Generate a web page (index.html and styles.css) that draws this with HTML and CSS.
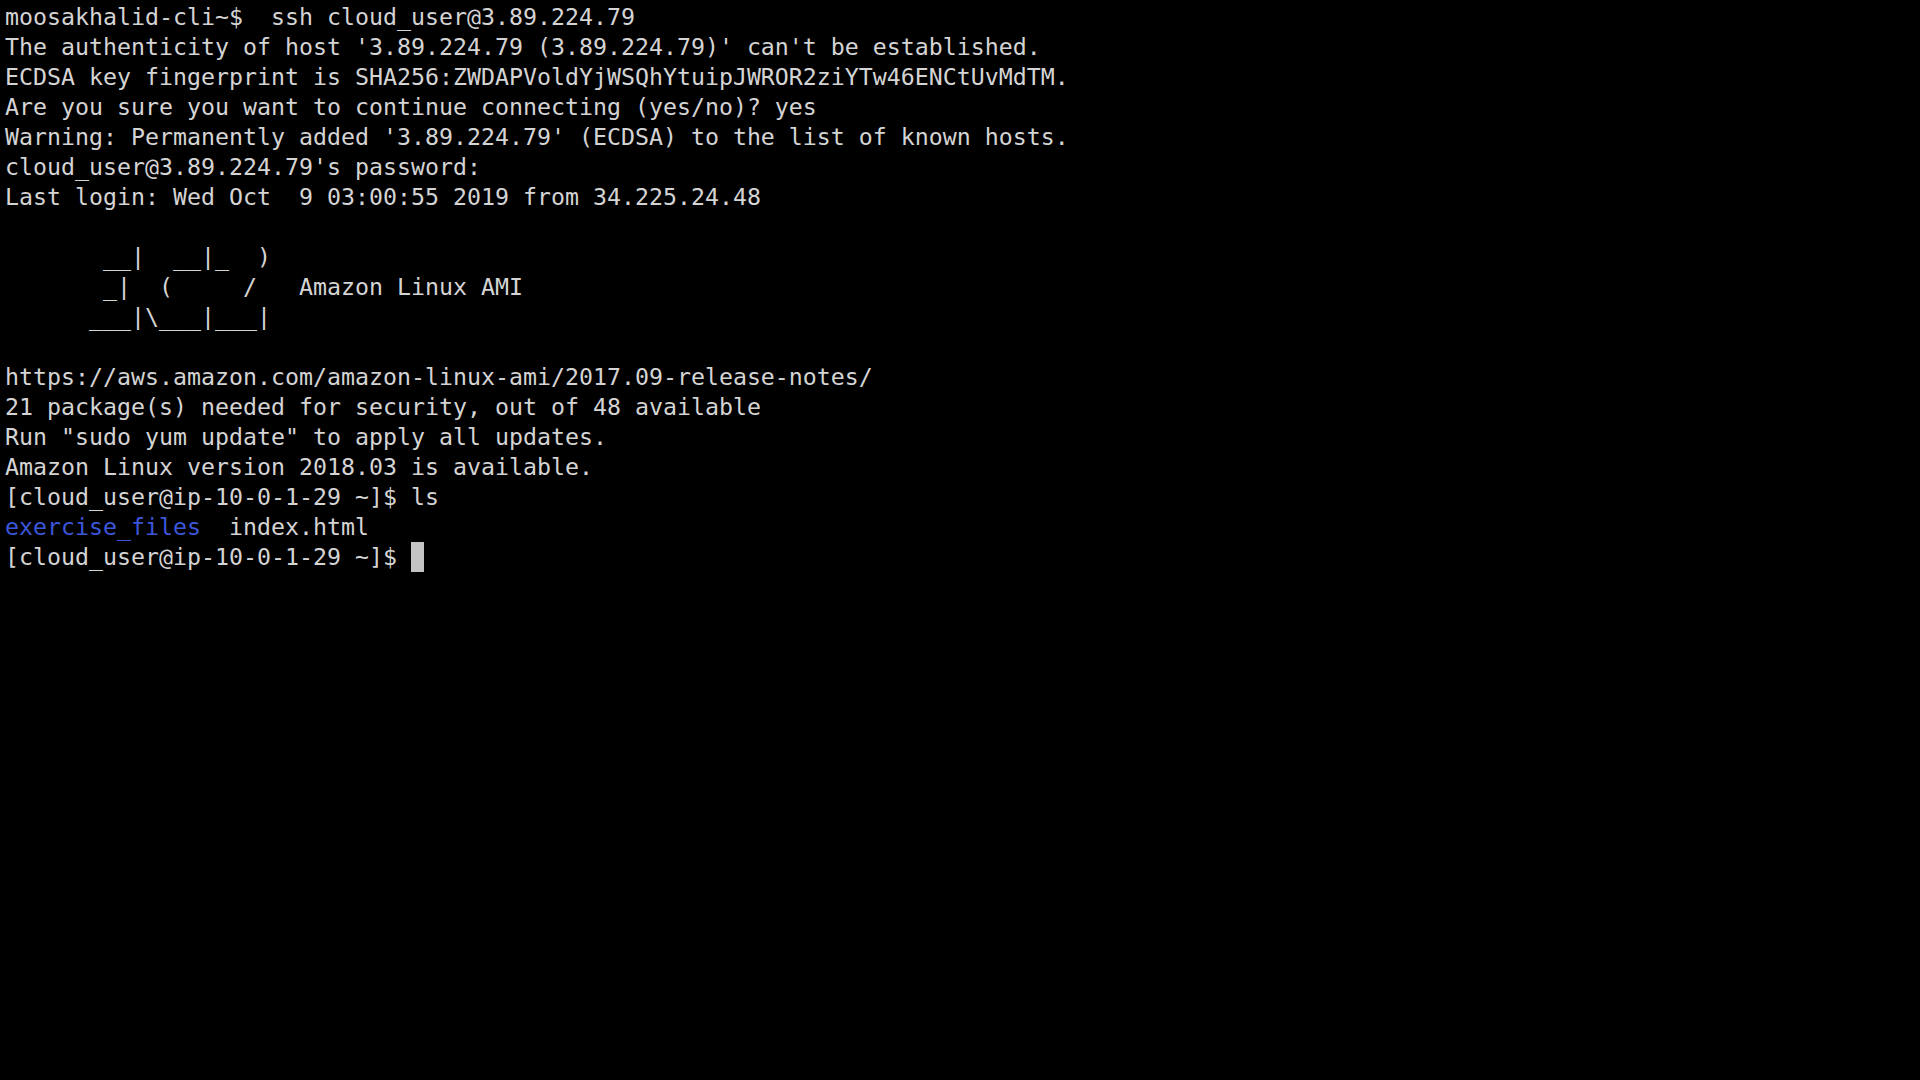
FILE: index.html
```html
<!DOCTYPE html>
<html lang="en">
<head>
<meta charset="utf-8">
<title>Terminal</title>
<link rel="stylesheet" href="styles.css">
</head>
<body>
<main class="terminal"><pre class="output">moosakhalid-cli~$  ssh cloud_user@3.89.224.79
The authenticity of host '3.89.224.79 (3.89.224.79)' can't be established.
ECDSA key fingerprint is SHA256:ZWDAPVoldYjWSQhYtuipJWROR2ziYTw46ENCtUvMdTM.
Are you sure you want to continue connecting (yes/no)? yes
Warning: Permanently added '3.89.224.79' (ECDSA) to the list of known hosts.
cloud_user@3.89.224.79's password: 
Last login: Wed Oct  9 03:00:55 2019 from 34.225.24.48

       __|  __|_  )
       _|  (     /   Amazon Linux AMI
      ___|\___|___|

https://aws.amazon.com/amazon-linux-ami/2017.09-release-notes/
21 package(s) needed for security, out of 48 available
Run "sudo yum update" to apply all updates.
Amazon Linux version 2018.03 is available.
[cloud_user@ip-10-0-1-29 ~]$ ls
<span class="dir">exercise_files</span>  index.html
[cloud_user@ip-10-0-1-29 ~]$ <span class="cursor"> </span></pre></main>
</body>
</html>
```
FILE: styles.css
```css
html, body {
  margin: 0;
  padding: 0;
  background: #000;
  height: 100%;
}
.terminal {
  padding: 2px 5px;
  background: #000;
  min-height: 100vh;
  box-sizing: border-box;
}
.output {
  margin: 0;
  font-family: "DejaVu Sans Mono", "Liberation Mono", monospace;
  font-size: 23.25px;
  line-height: 30px;
  color: #d4d4d4;
  white-space: pre;
}
.dir {
  color: #3b56d8;
}
.cursor {
  display: inline-block;
  width: 13px;
  height: 30px;
  vertical-align: top;
  background: #c4c4c4;
}
```
